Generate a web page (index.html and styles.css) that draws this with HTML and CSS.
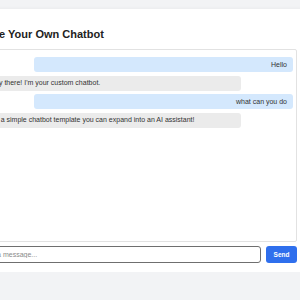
FILE: index.html
```html
<!DOCTYPE html>
<html>

<head>
  <meta charset="UTF-8">
  <link rel="stylesheet" href="styles.css">
</head>

<body>
  <div class="container">
    <h1 class="title">Create Your Own Chatbot</h1>
    <div id="chatbox" class="chatbox">
      <div class="message user">Hello</div>
      <div class="message bot">Hey there! I'm your custom chatbot.</div>
      <div class="message user">what can you do</div>
      <div class="message bot">It's a simple chatbot template you can expand into an AI assistant!</div>
    </div>
    <div class="input-row">
      <input type="text" id="userInput" placeholder="Type a message...">
      <button class="send">Send</button>
    </div>
  </div>
</body>

</html>
```

FILE: styles.css
```css
body {
  margin: 0;
  background-color: #f2f3f5;
  font-family: "Liberation Sans", Arial, Helvetica, sans-serif;
  overflow: hidden;
}

.container {
  width: 326px;
  margin: 9px 0 0 -39px;
  padding: 10px 10px 9px 10px;
  background-color: #fff;
  border-radius: 4px;
  box-shadow: 0 1px 5px rgba(0, 0, 0, 0.08);
}

.title {
  font-size: 11px;
  font-weight: bold;
  color: #222;
  margin: 9px 0 8px 0;
  line-height: 13px;
}

.chatbox {
  display: flex;
  flex-direction: column;
  gap: 3.5px;
  height: 177px;
  padding: 7px 3px 7px 12px;
  border: 1px solid #e2e2e2;
  border-radius: 2px;
}

.message {
  font-size: 7px;
  line-height: 8px;
  padding: 3.5px 6px;
  border-radius: 3px;
  color: #333;
}

.user {
  margin-left: 50px;
  background-color: #d4e8fd;
  text-align: right;
}

.bot {
  margin-right: 52px;
  background-color: #ebebeb;
}

.input-row {
  display: flex;
  gap: 5px;
  margin-top: 4px;
}

.input-row input {
  flex: 1;
  height: 17px;
  box-sizing: border-box;
  padding: 0 8px;
  font-family: inherit;
  font-size: 7px;
  border: 1px solid #6f6f6f;
  border-radius: 3px;
}

.input-row input::placeholder {
  color: #8a8a8a;
}

.send {
  width: 31px;
  height: 17px;
  padding: 0;
  font-family: inherit;
  font-size: 6.5px;
  font-weight: bold;
  color: #fff;
  background-color: #2f6fed;
  border: none;
  border-radius: 3px;
}
```
